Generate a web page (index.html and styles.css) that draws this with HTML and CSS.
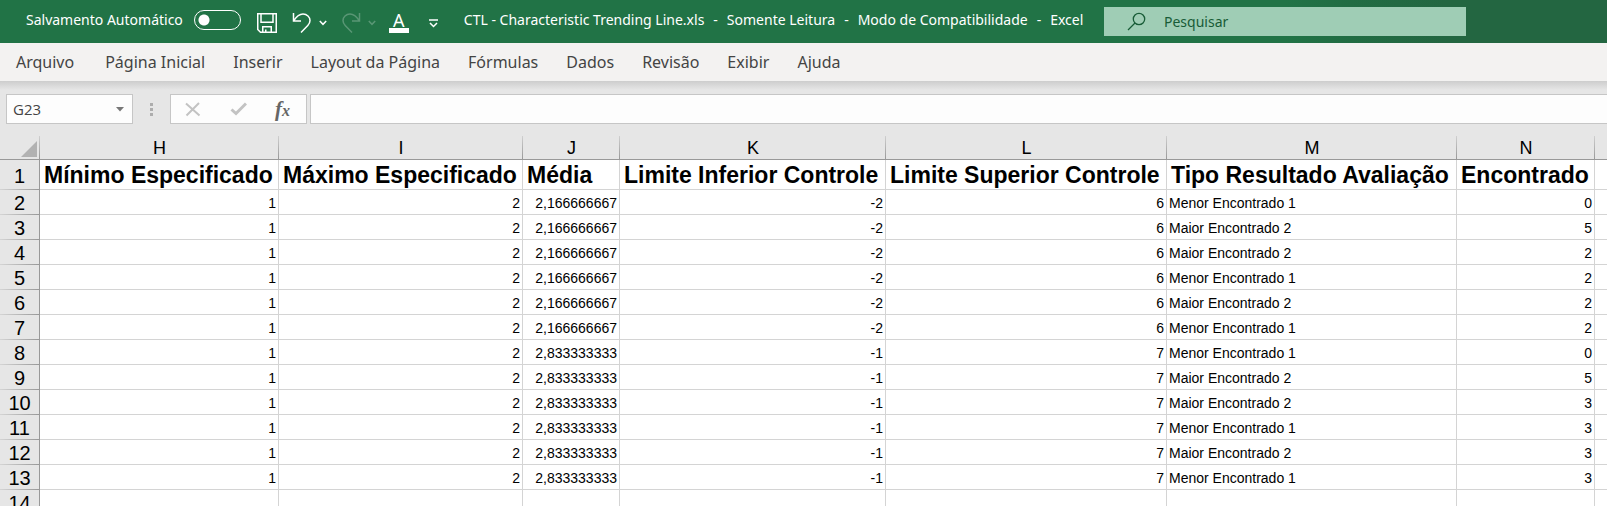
FILE: index.html
```html
<!DOCTYPE html>
<html lang="pt-BR">
<head>
<meta charset="utf-8">
<title>CTL - Characteristic Trending Line.xls - Excel</title>
<link rel="stylesheet" href="styles.css">
</head>
<body>
<header class="titlebar">
  <label class="autosave">Salvamento Automático <input type="checkbox" role="switch" class="switch"></label>
  <div class="quick">
    <button class="qbtn" aria-label="Salvar"><svg width="20" height="20" viewBox="0 0 20 20"><path d="M.75.75h18.500v18.500H3.500L.75 16.500zM4 1v8.250h12V1M5.750 19v-5.250h8.500V19M8.750 19v-2.500"/></svg></button>
    <button class="qbtn undo" aria-label="Desfazer"><svg width="20" height="22" viewBox="0 0 20 22"><path d="M1.500 1v8h7.500M1.800 8.700C4.500 4.500 7.500 2 11 2c4 0 7 3 7 6.500 0 2-.8 3.500-2.200 5L9 20.500"/></svg></button>
    <button class="qbtn chev" aria-label="Opções de desfazer"><svg width="8" height="6" viewBox="0 0 8 6"><path d="M.8 1 4 4.300 7.200 1"/></svg></button>
    <button class="qbtn redo" aria-label="Refazer" disabled><svg width="20" height="22" viewBox="0 0 20 22"><path d="M18.500 1v8H11M18.200 8.700C15.500 4.500 12.500 2 9 2 5 2 2 5 2 8.500c0 2 .8 3.500 2.200 5l6.800 7"/></svg></button>
    <button class="qbtn chev" aria-label="Opções de refazer" disabled><svg width="8" height="6" viewBox="0 0 8 6"><path d="M.8 1 4 4.300 7.200 1"/></svg></button>
    <button class="qbtn fontcolor" aria-label="Cor da fonte"><span>A</span></button>
    <button class="qbtn more" aria-label="Personalizar barra"><svg width="9" height="9" viewBox="0 0 9 9"><path d="M0 1h9M1 4l3.500 3.500L8 4"/></svg></button>
  </div>
  <h1 class="doc"><span>CTL - Characteristic Trending Line.xls</span><span>-</span><span>Somente Leitura</span><span>-</span><span>Modo de Compatibilidade</span><span>-</span><span>Excel</span></h1>
  <label class="search"><svg width="19" height="19" viewBox="0 0 19 19"><circle cx="12" cy="7" r="5.700"/><path d="M8 11 1 18"/></svg><input type="search" placeholder="Pesquisar" aria-label="Pesquisar"></label>
</header>
<nav class="tabs">
  <button class="first">Arquivo</button><button>Página Inicial</button><button>Inserir</button><button>Layout da Página</button><button>Fórmulas</button><button>Dados</button><button>Revisão</button><button>Exibir</button><button>Ajuda</button>
</nav>
<div class="formulabar">
  <div class="namebox"><input value="G23" aria-label="Caixa de nome"><button aria-label="Abrir lista de nomes"><svg width="8" height="5" viewBox="0 0 8 5"><path d="M0 0h8L4 4.500z"/></svg></button></div>
  <svg class="grip" width="3" height="13" viewBox="0 0 3 13"><path d="M0 0h3v3H0zM0 5h3v3H0zM0 10h3v3H0z"/></svg>
  <div class="fxgroup">
    <button aria-label="Cancelar"><svg width="16" height="15" viewBox="0 0 16 15"><path d="M1 1.500 14.500 13.500M14 1 1.500 13.500" stroke-width="2"/></svg></button>
    <button aria-label="Inserir"><svg width="17" height="14" viewBox="0 0 17 14"><path d="M1.500 7.500 6 11.500 16 1.500" stroke-width="3"/></svg></button>
    <button class="fx" aria-label="Inserir função"><span class="f">f</span><span class="x">x</span></button>
  </div>
  <input class="formula" aria-label="Barra de fórmulas">
</div>
<main class="sheet">
<table>
<colgroup><col class="c-row"><col class="c-h"><col class="c-i"><col class="c-j"><col class="c-k"><col class="c-l"><col class="c-m"><col class="c-n"><col></colgroup>
<thead><tr><th class="corner"><svg width="16" height="16" viewBox="0 0 16 16"><path d="M16 0v16H0z"/></svg></th><th>H</th><th>I</th><th>J</th><th>K</th><th>L</th><th>M</th><th>N</th><th></th></tr></thead>
<tbody>
<tr class="titles"><th>1</th><td>Mínimo Especificado</td><td>Máximo Especificado</td><td>Média</td><td>Limite Inferior Controle</td><td>Limite Superior Controle</td><td>Tipo Resultado Avaliação</td><td>Encontrado</td><td></td></tr>
<tr><th>2</th><td>1</td><td>2</td><td>2,166666667</td><td>-2</td><td>6</td><td class="txt">Menor Encontrado 1</td><td>0</td><td></td></tr>
<tr><th>3</th><td>1</td><td>2</td><td>2,166666667</td><td>-2</td><td>6</td><td class="txt">Maior Encontrado 2</td><td>5</td><td></td></tr>
<tr><th>4</th><td>1</td><td>2</td><td>2,166666667</td><td>-2</td><td>6</td><td class="txt">Maior Encontrado 2</td><td>2</td><td></td></tr>
<tr><th>5</th><td>1</td><td>2</td><td>2,166666667</td><td>-2</td><td>6</td><td class="txt">Menor Encontrado 1</td><td>2</td><td></td></tr>
<tr><th>6</th><td>1</td><td>2</td><td>2,166666667</td><td>-2</td><td>6</td><td class="txt">Maior Encontrado 2</td><td>2</td><td></td></tr>
<tr><th>7</th><td>1</td><td>2</td><td>2,166666667</td><td>-2</td><td>6</td><td class="txt">Menor Encontrado 1</td><td>2</td><td></td></tr>
<tr><th>8</th><td>1</td><td>2</td><td>2,833333333</td><td>-1</td><td>7</td><td class="txt">Menor Encontrado 1</td><td>0</td><td></td></tr>
<tr><th>9</th><td>1</td><td>2</td><td>2,833333333</td><td>-1</td><td>7</td><td class="txt">Maior Encontrado 2</td><td>5</td><td></td></tr>
<tr><th>10</th><td>1</td><td>2</td><td>2,833333333</td><td>-1</td><td>7</td><td class="txt">Maior Encontrado 2</td><td>3</td><td></td></tr>
<tr><th>11</th><td>1</td><td>2</td><td>2,833333333</td><td>-1</td><td>7</td><td class="txt">Menor Encontrado 1</td><td>3</td><td></td></tr>
<tr><th>12</th><td>1</td><td>2</td><td>2,833333333</td><td>-1</td><td>7</td><td class="txt">Maior Encontrado 2</td><td>3</td><td></td></tr>
<tr><th>13</th><td>1</td><td>2</td><td>2,833333333</td><td>-1</td><td>7</td><td class="txt">Menor Encontrado 1</td><td>3</td><td></td></tr>
<tr><th>14</th><td></td><td></td><td></td><td></td><td></td><td></td><td></td><td></td></tr>
</tbody>
</table>
</main>
</body>
</html>
```
FILE: styles.css
```css
* { box-sizing: border-box; }
body {
  margin: 0;
  height: 100vh;
  overflow: hidden;
  display: flex;
  flex-direction: column;
  background: #e6e6e6;
  font-family: "Segoe UI", "Noto Sans", sans-serif;
}
button, input { font: inherit; color: inherit; margin: 0; padding: 0; border: 0; background: none; outline: 0; }
svg { display: block; }

.titlebar {
  flex: none;
  display: flex;
  align-items: center;
  height: 43px;
  padding-left: 26px;
  color: #fff;
  font-size: 14px;
  background: linear-gradient(90deg, #217346 80%, #216c43 84%, #236641 90%, #236641);
}
.autosave { display: flex; align-items: center; gap: 11px; white-space: nowrap; line-height: 20px; padding-bottom: 3px; }
.switch {
  appearance: none;
  width: 47px;
  height: 20px;
  border: 1px solid #fff;
  border-radius: 10px;
  background: radial-gradient(circle at 9px 9px, #fff 5px, transparent 6px);
}
.quick { display: flex; align-items: center; margin-left: 16px; padding-top: 3px; }
.qbtn { display: flex; }
.qbtn svg { fill: none; stroke: #fff; stroke-width: 1.5; }
.qbtn:disabled { opacity: .25; }
.undo { margin-left: 15px; }
.chev { margin-left: 7px; }
.redo { margin-left: 14px; }
.fontcolor {
  justify-content: center;
  width: 20px;
  height: 20px;
  margin-left: 13px;
  border-bottom: 5px solid #fff;
  font-size: 18px;
  line-height: 14px;
}
.more { margin-left: 20px; }
.doc { display: flex; gap: 9px; margin: 0 8px 0 26px; padding-bottom: 3px; font-size: 14px; font-weight: 400; line-height: 20px; white-space: nowrap; }
.search {
  display: flex;
  align-items: center;
  gap: 18px;
  flex: 0 1 362px;
  height: 29px;
  margin-left: auto;
  margin-right: 141px;
  padding-left: 23px;
  background: #9fcdb5;
  color: #185c37;
}
.search svg { flex: none; fill: none; stroke: #185c37; stroke-width: 1.3; }
.search input { flex: 1; min-width: 0; }
.search input::placeholder { color: #185c37; opacity: 1; }

.tabs {
  flex: none;
  display: flex;
  gap: 28px;
  height: 38px;
  padding: 0 16px;
  background: #f3f2f1;
  color: #444;
  font-size: 16px;
  white-space: nowrap;
}
.first { margin-right: 3px; }

.formulabar {
  flex: none;
  display: flex;
  align-items: center;
  padding: 13px 0 12px 6px;
  background: linear-gradient(#cdcdcd, #e6e6e6 9px);
}
.namebox, .fxgroup, .formula { height: 30px; border: 1px solid #c6c6c6; background: #fdfdfd; }
.namebox { display: flex; align-items: center; width: 127px; padding: 0 8px 0 6px; font-family: "Segoe UI", "Open Sans", sans-serif; font-size: 15px; color: #444; }
.namebox input { flex: 1; min-width: 0; }
.namebox svg { fill: #777; }
.grip { margin: 0 17px; fill: #adadad; }
.fxgroup { display: flex; align-items: center; justify-content: space-between; width: 137px; padding: 0 16px 0 14px; margin-right: 3px; }
.fxgroup svg { fill: none; stroke: #c3c3c3; }
.fx { display: flex; align-items: baseline; color: #666; font-family: "Liberation Serif", serif; font-style: italic; font-weight: 700; }
.f { font-size: 21px; }
.x { font-size: 16px; }
.formula { flex: 1; min-width: 0; border-right: 0; padding: 0 6px; }

.sheet { flex: 1; min-height: 0; overflow: hidden; background: #fff; font-family: "Liberation Sans", Arial, sans-serif; }
table { width: 100%; table-layout: fixed; border-collapse: separate; border-spacing: 0; }
.c-row { width: 40px; }
.c-h { width: 239px; }
.c-i { width: 244px; }
.c-j { width: 97px; }
.c-k { width: 266px; }
.c-l { width: 281px; }
.c-m { width: 290px; }
.c-n { width: 138px; }
th { padding: 0; background: #e6e6e6; color: #000; font-weight: 400; white-space: nowrap; }
thead th {
  height: 24px;
  padding-top: 2px;
  font-size: 18px;
  line-height: 21px;
  border-bottom: 1px solid #999;
  background: linear-gradient(#cfcfcf, #999) right / 1px 100% no-repeat #e6e6e6;
}
thead th:last-child { background: #e6e6e6; }
.corner svg { margin: 1px 3px 0 auto; fill: #b2b2b2; }
tbody th {
  border-right: 1px solid #999;
  font-size: 20px;
  line-height: 24px;
  background: linear-gradient(90deg, #d4d4d4, #999) bottom / 100% 1px no-repeat #e6e6e6;
}
td {
  height: 25px;
  padding: 2px 2px 0;
  border-right: 1px solid #d4d4d4;
  border-bottom: 1px solid #d4d4d4;
  font-size: 14px;
  line-height: 20px;
  text-align: right;
  white-space: nowrap;
}
td:last-child { border-right: 0; }
.txt { text-align: left; }
.titles th { padding-top: 2px; }
.titles td { height: 30px; padding: 1px 0 0 4px; font-size: 23px; line-height: 26px; font-weight: 700; text-align: left; }
```
